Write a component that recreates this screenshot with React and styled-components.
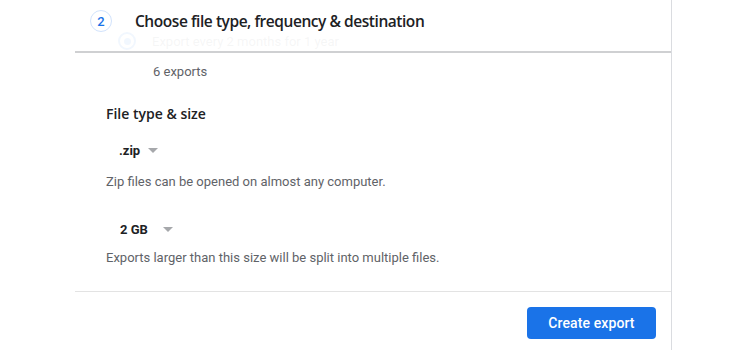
import styled, { createGlobalStyle } from 'styled-components'

const GlobalStyle = createGlobalStyle`
	html, body {
		margin: 0;
		padding: 0;
		background: #ffffff;
	}
	body {
		font-family: Roboto, 'Liberation Sans', Arial, sans-serif;
		color: #5f6368;
	}
`

const Page = styled.div`
	width: 750px;
	height: 350px;
	overflow: hidden;
	background: #ffffff;
`

const Panel = styled.div`
	position: relative;
	margin-left: 75px;
	width: 596px;
	height: 350px;
	border-right: 1px solid #dadce0;
`

/* sticky step header lying over scrolled content */
const StepHeader = styled.div`
	position: absolute;
	top: 0;
	left: 0;
	right: 0;
	height: 53px;
	box-sizing: border-box;
	display: flex;
	align-items: center;
	gap: 23px;
	padding: 0 0 9px 15px;
	background: rgba(255, 255, 255, 0.94);
	border-bottom: 2px solid #cfd0d2;
	z-index: 2;
`

const StepNumber = styled.div`
	width: 20px;
	height: 20px;
	border-radius: 50%;
	border: 1.5px solid #d2e3fc;
	display: flex;
	align-items: center;
	justify-content: center;
	color: #1a73e8;
	font-size: 13px;
	font-weight: 500;
`

const StepTitle = styled.h2`
	margin: 0;
	font-family: 'Open Sans', Roboto, sans-serif;
	font-size: 15.5px;
	font-weight: 600;
	color: #202124;
	letter-spacing: -0.45px;
`

const Body = styled.div`
	display: flex;
	flex-direction: column;
`

const FadedRow = styled.div`
	margin-top: 30px;
	height: 22px;
	display: flex;
	align-items: center;
	gap: 16px;
	padding-left: 43px;
	font-size: 13px;
	color: #5f6368;
`

const Radio = styled.span`
	width: 14px;
	height: 14px;
	border-radius: 50%;
	border: 2px solid #1a73e8;
	display: flex;
	align-items: center;
	justify-content: center;
	&::after {
		content: '';
		width: 7px;
		height: 7px;
		border-radius: 50%;
		background: #1a73e8;
	}
`

const Count = styled.div`
	margin-top: 10px;
	padding-left: 78px;
	line-height: 20px;
	font-size: 13px;
	color: #5f6368;
`

const Section = styled.div`
	margin-top: 22px;
	padding-left: 31px;
	display: flex;
	flex-direction: column;
`

const SectionTitle = styled.h3`
	margin: 0;
	line-height: 20px;
	font-family: 'Open Sans', Roboto, sans-serif;
	font-size: 14px;
	font-weight: 600;
	color: #202124;
`

const Select = styled.div`
	margin-top: ${(p) => p.$top}px;
	margin-left: ${(p) => p.$indent}px;
	height: 28px;
	display: flex;
	align-items: center;
	font-size: 13px;
	font-weight: 700;
	color: #202124;
`

const SelectValue = styled.span`
	min-width: ${(p) => p.$width}px;
`

const Caret = styled.span`
	width: 0;
	height: 0;
	border-left: 5.5px solid transparent;
	border-right: 5.5px solid transparent;
	border-top: 5px solid #a6a8ab;
`

const Hint = styled.p`
	margin: ${(p) => p.$top}px 0 0;
	line-height: 20px;
	font-size: 13px;
	color: #5f6368;
`

const Footer = styled.div`
	margin-top: 23px;
	border-top: 1px solid #e3e3e3;
	display: flex;
	justify-content: flex-end;
	padding: 15px 15px 0 0;
`

const PrimaryButton = styled.button`
	height: 32px;
	width: 129px;
	border: none;
	border-radius: 4px;
	background: #1a73e8;
	color: #ffffff;
	font-family: Roboto, 'Liberation Sans', sans-serif;
	font-size: 14px;
	font-weight: 500;
	letter-spacing: 0.1px;
	cursor: pointer;
`

export default function App() {
	return (
		<Page>
			<GlobalStyle />
			<Panel>
				<StepHeader>
					<StepNumber>2</StepNumber>
					<StepTitle>Choose file type, frequency &amp; destination</StepTitle>
				</StepHeader>
				<Body>
					<FadedRow>
						<Radio />
						<span>Export every 2 months for 1 year</span>
					</FadedRow>
					<Count>6 exports</Count>
					<Section>
						<SectionTitle>File type &amp; size</SectionTitle>
						<Select $top={12} $indent={13}>
							<SelectValue $width={29}>.zip</SelectValue>
							<Caret />
						</Select>
						<Hint $top={8}>Zip files can be opened on almost any computer.</Hint>
						<Select $top={23} $indent={14}>
							<SelectValue $width={43}>2 GB</SelectValue>
							<Caret />
						</Select>
						<Hint $top={5}>Exports larger than this size will be split into multiple files.</Hint>
					</Section>
					<Footer>
						<PrimaryButton>Create export</PrimaryButton>
					</Footer>
				</Body>
			</Panel>
		</Page>
	)
}
